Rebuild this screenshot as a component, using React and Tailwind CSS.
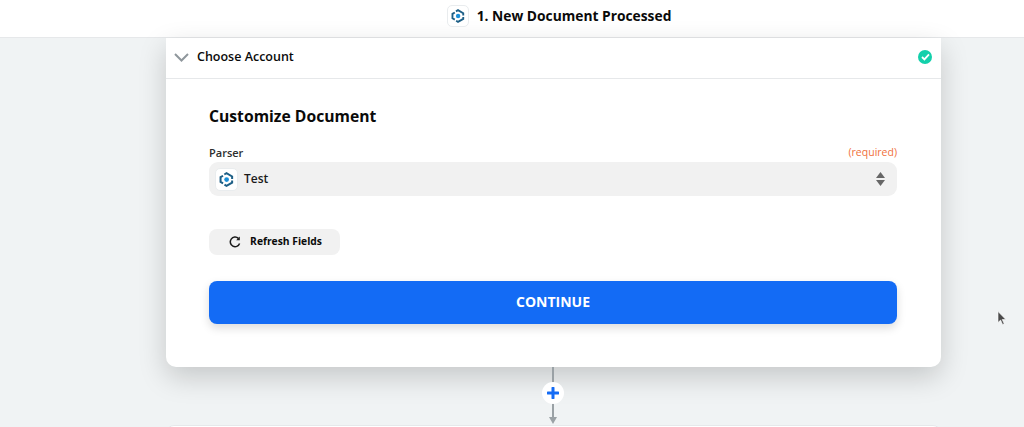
const Logo = ({ s = 14 }) => (
  <svg width={s} height={s} viewBox="0 0 24 24" fill="none">
    <path d="M6.5 6 2.5 8.3v7.6l4 2.3" stroke="#1d5f86" strokeWidth="3.2" />
    <path d="M8.5 4 12 2l9 5.2v4" stroke="#1d5f86" strokeWidth="3.2" />
    <path d="M21 13.5v3.4L12 22l-3.2-1.9" stroke="#1d5f86" strokeWidth="3.2" />
    <circle cx="12.2" cy="12" r="3.8" fill="#1a8fd8" />
  </svg>
);

const Chevron = () => (
  <svg width="15" height="9" viewBox="0 0 15 9" fill="none">
    <path d="M1 1l6.5 6.5L14 1" stroke="#8f979c" strokeWidth="2" />
  </svg>
);

export default function App() {
  return (
    <div className="h-[427px] w-[1024px] overflow-hidden bg-[#f0f3f4] font-['Open_Sans',sans-serif] text-[#0a0a0a]">
      <header className="flex h-[38px] items-center justify-center gap-[8px] border-b border-[#e6e8ea] bg-white pb-[7px] pl-[94px] pt-[2px]">
        <div className="flex h-[22px] w-[22px] items-center justify-center rounded-[5px] border border-[#e9ecee] bg-white">
          <Logo />
        </div>
        <span className="text-[13.8px] font-bold leading-none">1. New Document Processed</span>
      </header>

      <main className="ml-[166px] w-[775px]">
        <section className="flex h-[329px] flex-col rounded-b-[10px] bg-white shadow-[0_10px_28px_rgba(0,0,0,0.18)]">
          <div className="flex h-[41px] shrink-0 items-center border-b border-[#e6e8ea] pb-[2px] pl-[8px] pr-[9px]">
            <Chevron />
            <span className="ml-[8px] text-[12.5px] font-semibold">Choose Account</span>
            <span className="ml-auto flex h-[14px] w-[14px] items-center justify-center rounded-full bg-[#13d0ab]">
              <svg width="9" height="8" viewBox="0 0 9 8" fill="none">
                <path d="M1 4l2.4 2.4L8 1.4" stroke="#fff" strokeWidth="1.8" />
              </svg>
            </span>
          </div>

          <div className="flex flex-col pl-[43px] pr-[44px] pt-[26px]">
            <h2 className="text-[15.7px] font-bold leading-[22px]">Customize Document</h2>

            <div className="mt-[18px] flex h-[14px] items-center justify-between">
              <span className="text-[11px] font-semibold leading-none text-[#2d2e2e]">Parser</span>
              <span className="text-[10.5px] leading-none text-[#f0703c]">(required)</span>
            </div>

            <div className="mt-[3px] flex h-[34px] items-center rounded-[9px] bg-[#f1f1f1] pl-[6px] pr-[12px]">
              <div className="flex h-[23px] w-[23px] items-center justify-center rounded-[5px] border border-[#e9ecee] bg-white">
                <Logo s={15} />
              </div>
              <span className="ml-[6px] text-[12px] font-semibold text-[#1a1a1a]">Test</span>
              <svg className="ml-auto" width="9" height="14" viewBox="0 0 9 14">
                <path d="M4.5 0 9 6H0z" fill="#666" />
                <path d="M4.5 14 0 8h9z" fill="#666" />
              </svg>
            </div>

            <button className="mt-[33px] flex h-[26px] w-[131px] items-center justify-center gap-[9px] rounded-[8px] bg-[#f1f1f1] pl-[2px]">
              <svg width="12" height="12" viewBox="0 0 12 12" fill="none">
                <path d="M10.6 7.5A4.8 4.8 0 1 1 9.4 2.4" stroke="#1a1a1a" strokeWidth="1.5" />
                <path d="M10.8 .6v3.6H7.2z" fill="#1a1a1a" />
              </svg>
              <span className="text-[10.3px] font-bold">Refresh Fields</span>
            </button>

            <button className="mt-[26px] flex h-[43px] items-center justify-center rounded-[8px] bg-[#136bf5] pb-[2px] text-[14px] font-bold text-white shadow-[0_4px_10px_rgba(0,0,0,0.14)]">
              CONTINUE
            </button>
          </div>
        </section>

        <div className="relative flex h-[58px] flex-col items-center pr-[1px]">
          <div className="w-[2px] flex-1 bg-[#9aa1a5]" />
          <svg className="mb-[1px] shrink-0" width="8" height="7" viewBox="0 0 8 7">
            <path d="M0 0h8L4 7z" fill="#9aa1a5" />
          </svg>
          <div className="absolute left-[376px] top-[15px] flex h-[22px] w-[22px] items-center justify-center rounded-full bg-white">
            <svg width="12" height="12" viewBox="0 0 12 12" fill="none">
              <path d="M6 1v10M1 6h10" stroke="#136bf5" strokeWidth="3" strokeLinecap="round" />
            </svg>
          </div>
        </div>

        <div className="h-[10px] rounded-t-[8px] border border-[#e6e8ea] bg-white" />
      </main>

      <svg className="absolute left-[997px] top-[311px]" width="10" height="15" viewBox="0 0 10 15">
        <path d="M1 0.5v11l2.6-2.4 2 4.4 1.6-.8-2-4.2h3.6z" fill="#4a4a4a" stroke="#fff" strokeWidth=".6" />
      </svg>
    </div>
  );
}
